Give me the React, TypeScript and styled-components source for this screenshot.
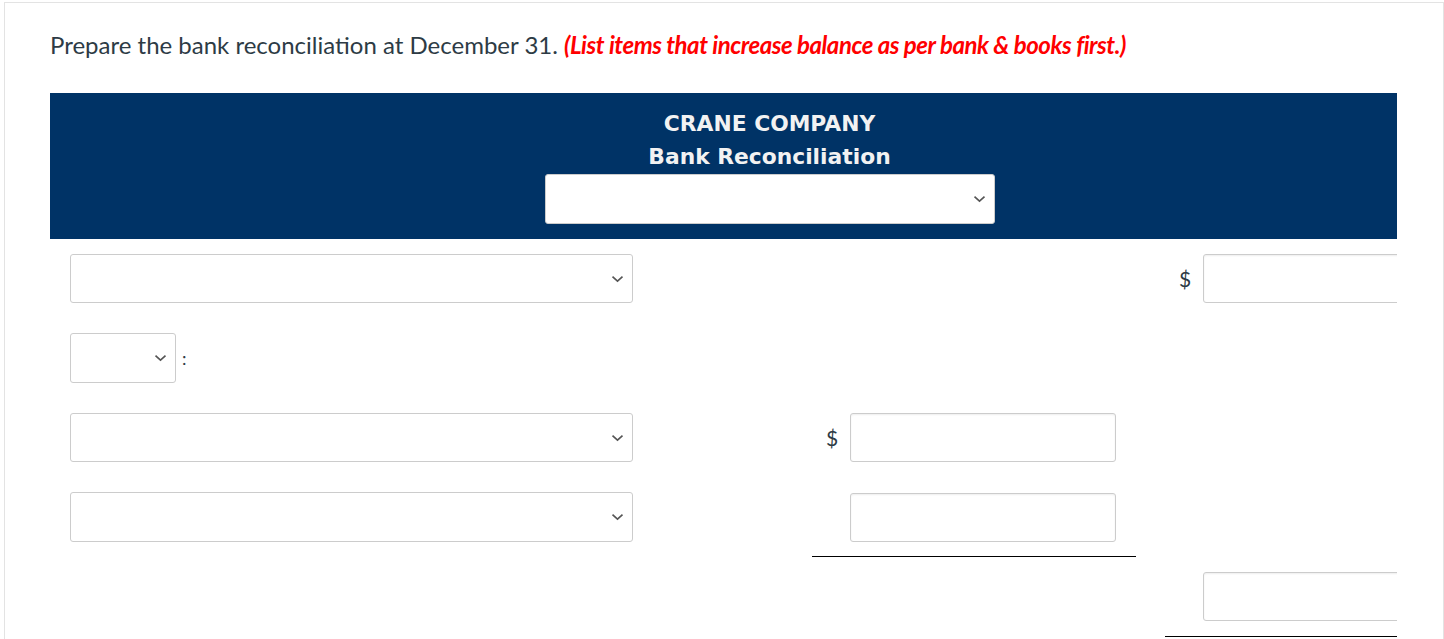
import styled, { createGlobalStyle } from "styled-components";

const GlobalStyle = createGlobalStyle`
    html, body {
        margin: 0;
        padding: 0;
        background: #ffffff;
    }
    body {
        font-family: Lato, "Noto Sans", "Liberation Sans", sans-serif;
        color: #2d3b45;
    }
`;

const Frame = styled.div`
    margin: 2px 0 0 4px;
    border: 1px solid #e3e3e3;
    border-bottom: none;
    padding: 0 45px 0 45px;
    min-height: 640px;
    box-sizing: border-box;
`;

const Prompt = styled.p`
    margin: 28px 0 34px;
    font-size: 24px;
    line-height: 28px;
    color: #2d3b45;
`;

const Hint = styled.strong`
    color: #ff0000;
    font-style: italic;
    font-weight: 700;
    letter-spacing: -0.45px;
`;

const Scroller = styled.div`
    width: 1347px;
    overflow: hidden;
`;

const Sheet = styled.div`
    width: 1439px;
`;

const Banner = styled.div`
    background: #003366;
    padding: 14px 0 15px;
    display: flex;
    flex-direction: column;
    align-items: center;
`;

const BannerLine = styled.div`
    color: #f2f2f2;
    font-family: "DejaVu Sans", Verdana, sans-serif;
    font-weight: 700;
    font-size: 21.8px;
    line-height: 33px;
`;

const BannerPick = styled.div`
    margin-top: 1px;
`;

const Grid = styled.div`
    display: grid;
    grid-template-columns: 762px 353px 324px;
`;

const Cell = styled.div<{ $rule?: boolean }>`
    display: flex;
    align-items: center;
    padding: 15px 0 14.5px;
    height: 49px;
    border-bottom: ${(p) => (p.$rule ? "1px solid #000" : "1px solid transparent")};
`;

const LabelCell = styled(Cell)`
    padding-left: 20px;
`;

const AmountCell = styled(Cell)`
    box-sizing: content-box;
    padding-left: 14px;
    width: 310px;
`;

const Dollar = styled.span<{ $hidden?: boolean }>`
    width: 24px;
    font-size: 21px;
    color: #2d3b45;
    visibility: ${(p) => (p.$hidden ? "hidden" : "visible")};
`;

const Colon = styled.span`
    margin-left: 6px;
    font-size: 18px;
    color: #2d3b45;
`;

const SelectBox = styled.div<{ $w: number; $h?: number }>`
    position: relative;
    width: ${(p) => p.$w}px;
    height: ${(p) => p.$h ?? 49}px;
    box-sizing: border-box;
    background: #fff;
    border: 1px solid #cccccc;
    border-radius: 3px;
    flex-shrink: 0;
`;

const Chevron = styled.svg`
    position: absolute;
    right: 8px;
    top: 50%;
    margin-top: -4px;
`;

const Field = styled.div`
    width: 266px;
    height: 49px;
    box-sizing: border-box;
    background: #fff;
    border: 1px solid #cccccc;
    border-radius: 3px;
    box-shadow: inset 0 1px 2px rgba(0, 0, 0, 0.07);
    flex-shrink: 0;
`;

const Select = ({ w, h }: { w: number; h?: number }) => (
    <SelectBox $w={w} $h={h}>
        <Chevron width="13" height="8" viewBox="0 0 13 8">
            <path d="M1.5 1.6 L6.5 6.2 L11.5 1.6" fill="none" stroke="#555" strokeWidth="1.6" />
        </Chevron>
    </SelectBox>
);

const Empty = styled.div``;

export default function App() {
    return (
        <>
            <GlobalStyle />
            <Frame>
                <Prompt>
                    Prepare the bank reconciliation at December 31.{" "}
                    <Hint>(List items that increase balance as per bank &amp; books first.)</Hint>
                </Prompt>
                <Scroller>
                    <Sheet>
                        <Banner>
                            <BannerLine>CRANE COMPANY</BannerLine>
                            <BannerLine>Bank Reconciliation</BannerLine>
                            <BannerPick>
                                <Select w={450} h={50} />
                            </BannerPick>
                        </Banner>
                        <Grid>
                            <LabelCell>
                                <Select w={563} />
                            </LabelCell>
                            <Empty />
                            <AmountCell>
                                <Dollar>$</Dollar>
                                <Field />
                            </AmountCell>

                            <LabelCell>
                                <Select w={106} h={50} />
                                <Colon>:</Colon>
                            </LabelCell>
                            <Empty />
                            <Empty />

                            <LabelCell>
                                <Select w={563} />
                            </LabelCell>
                            <AmountCell>
                                <Dollar>$</Dollar>
                                <Field />
                            </AmountCell>
                            <Empty />

                            <LabelCell>
                                <Select w={563} h={50} />
                            </LabelCell>
                            <AmountCell $rule>
                                <Dollar $hidden>$</Dollar>
                                <Field />
                            </AmountCell>
                            <Empty />

                            <Empty />
                            <Empty />
                            <AmountCell $rule>
                                <Dollar $hidden>$</Dollar>
                                <Field />
                            </AmountCell>
                        </Grid>
                    </Sheet>
                </Scroller>
            </Frame>
        </>
    );
}
